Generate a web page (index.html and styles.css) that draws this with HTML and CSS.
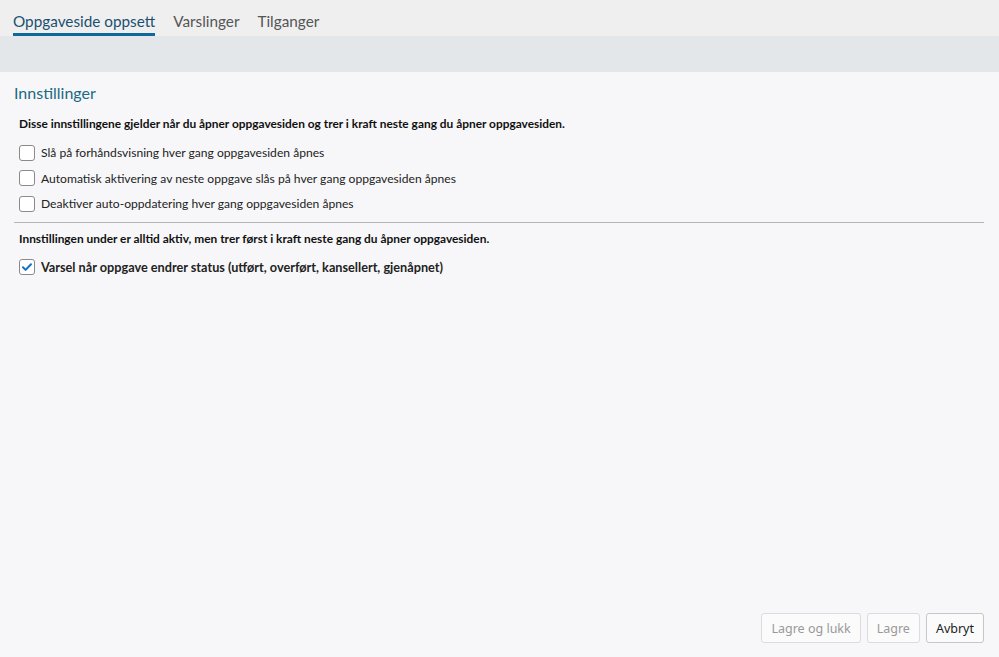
FILE: index.html
```html
<!DOCTYPE html>
<html lang="nb">
<head>
    <meta charset="UTF-8">
    <title>Oppgaveside oppsett</title>
    <link rel="stylesheet" href="styles.css">
</head>
<body>
    <div class="tabs">
        <a class="tab active">Oppgaveside oppsett</a>
        <a class="tab">Varslinger</a>
        <a class="tab">Tilganger</a>
    </div>
    <div class="band"></div>

    <div class="content">
        <h2 class="title">Innstillinger</h2>
        <p class="note">Disse innstillingene gjelder når du åpner oppgavesiden og trer i kraft neste gang du åpner oppgavesiden.</p>

        <label class="option"><span class="box"></span>Slå på forhåndsvisning hver gang oppgavesiden åpnes</label>
        <label class="option"><span class="box"></span>Automatisk aktivering av neste oppgave slås på hver gang oppgavesiden åpnes</label>
        <label class="option"><span class="box"></span>Deaktiver auto-oppdatering hver gang oppgavesiden åpnes</label>

        <hr class="divider">

        <p class="note">Innstillingen under er alltid aktiv, men trer først i kraft neste gang du åpner oppgavesiden.</p>
        <label class="option strong">
            <span class="box checked">
                <svg width="12" height="12" viewBox="0 0 12 12"><path d="M2 6.3l2.6 2.6L10 3.2" fill="none" stroke="#1570c4" stroke-width="2" stroke-linecap="round" stroke-linejoin="round"/></svg>
            </span>Varsel når oppgave endrer status (utført, overført, kansellert, gjenåpnet)
        </label>
    </div>

    <div class="footer">
        <button class="btn" disabled>Lagre og lukk</button>
        <button class="btn" disabled>Lagre</button>
        <button class="btn">Avbryt</button>
    </div>
</body>
</html>
```

FILE: styles.css
```css
html, body {
    height: 100%;
}

body {
    margin: 0;
    background: #f7f7f9;
    font-family: "Lato", "Noto Sans", sans-serif;
    color: #1a1a1a;
    display: flex;
    flex-direction: column;
}

.tabs {
    background: #efefef;
    height: 36px;
    box-sizing: border-box;
    padding: 0 13px;
    display: flex;
    gap: 18px;
    align-items: flex-end;
}

.tab {
    font-size: 15.3px;
    color: #555;
    padding-bottom: 2px;
    border-bottom: 3px solid transparent;
    line-height: 19px;
}

.tab.active {
    color: #1b4f72;
    border-bottom-color: #12689b;
}

.band {
    background: #e3e7e9;
    height: 36px;
}

.content {
    flex: 1;
    padding: 12px 14px 0 14px;
}

.title {
    margin: 0 0 14px 0;
    font-size: 16px;
    font-weight: 400;
    color: #1b6a80;
    line-height: 18px;
}

.note {
    margin: 0 0 8px 5px;
    font-size: 11.9px;
    font-weight: 700;
    color: #111;
    line-height: 16px;
}

.option {
    display: flex;
    align-items: center;
    gap: 6px;
    font-size: 12.1px;
    color: #222;
    height: 25.5px;
    margin-left: 5px;
}

.option.strong {
    font-weight: 700;
    font-size: 12.7px;
}

.box {
    width: 14px;
    height: 14px;
    border: 1px solid #8a8a8a;
    border-radius: 3px;
    background: #fff;
    display: flex;
    align-items: center;
    justify-content: center;
    flex-shrink: 0;
}

.divider {
    border: none;
    border-top: 1px solid #b5b5b5;
    margin: 5px 1px 8px 0;
}

.footer {
    display: flex;
    justify-content: flex-end;
    gap: 6px;
    padding: 0 15px 14px 0;
}

.btn {
    font-family: "Noto Sans", sans-serif;
    font-size: 12.5px;
    height: 30px;
    padding: 0 9px;
    background: #fbfbfb;
    border: 1px solid #c7c7c7;
    border-radius: 3px;
    color: #222;
}

.btn:disabled {
    color: #999;
    border-color: #dcdcdc;
}
```
